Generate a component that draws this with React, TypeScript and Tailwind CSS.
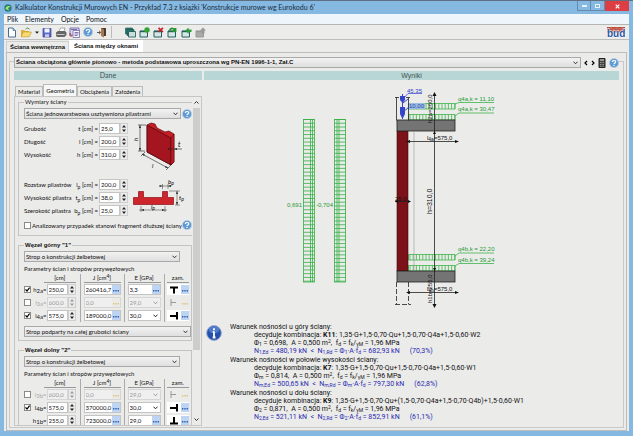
import React from 'react';

type ParamRow = {
  name: string;
  sub: string;
  size: string;
  j: string;
  e: string;
  checked?: boolean;
  noCheck?: boolean;
  eSelect?: boolean;
  joint: 'tee' | 'right' | 'left' | 'base';
};

const topRows: ParamRow[] = [
  { name: 'h', sub: '2a', size: '250,0', j: '260416,7', e: '3,3', checked: true, joint: 'tee' },
  { name: 'l', sub: '3a', size: '600,0', j: '0,0', e: '29,0', eSelect: true, joint: 'right' },
  { name: 'l', sub: '4a', size: '575,0', j: '189000,0', e: '30,0', checked: true, eSelect: true, joint: 'left' },
];

const bottomRows: ParamRow[] = [
  { name: 'l', sub: '3b', size: '600,0', j: '0,0', e: '29,0', eSelect: true, joint: 'right' },
  { name: 'l', sub: '4b', size: '575,0', j: '370000,0', e: '30,0', checked: true, eSelect: true, joint: 'left' },
  { name: 'h', sub: '1b', size: '255,0', j: '723000,0', e: '29,0', noCheck: true, joint: 'base' },
];

const HelpIcon: React.FC = () => (
  <button type="button" aria-label="Pomoc" className="shrink-0">
    <svg className="w-[10px] h-[10px] block" viewBox="0 0 10 10">
      <circle cx="5" cy="5" r="4.6" fill="#5f9ad4" stroke="#b9cfe4" strokeWidth="0.8" />
      <path d="M3.4 3.9C3.4 2 6.7 2 6.7 3.9c0 1.2-1.7 1.2-1.7 2.3M5 7v1" stroke="#fff" strokeWidth="1.2" fill="none" />
    </svg>
  </button>
);

const Select: React.FC<{ label: string; value: string; className?: string }> = ({ label, value, className = '' }) => (
  <div className={`relative ${className}`}>
    <select
      aria-label={label}
      className="block w-full h-[11px] appearance-none border border-[#a9a9a9] bg-gradient-to-b from-[#f2f2f2] to-[#dfdfdf] pl-px pr-3 text-[#111] leading-[9px]"
    >
      <option>{value}</option>
    </select>
    <svg className="absolute right-[3px] top-[4px] w-[5px] h-[4px] pointer-events-none" viewBox="0 0 5 4">
      <path d="M.5 .7 2.5 2.8 4.5 .7" stroke="#333" fill="none" />
    </svg>
  </div>
);

const Spinner: React.FC<{ disabled?: boolean }> = ({ disabled }) => (
  <button
    type="button"
    aria-label="Zmień wartość"
    disabled={disabled}
    className="w-[8px] h-[11px] shrink-0 border border-[#cfcfcf] bg-[#ececec] text-[#222] disabled:text-[#999]"
  >
    <svg className="block w-[6px] h-[9px]" viewBox="0 0 6 9" fill="currentColor">
      <path d="M3 1 5 3.4H1zM3 8 1 5.6h4z" />
    </svg>
  </button>
);

const DotsButton: React.FC<{ disabled?: boolean }> = ({ disabled }) => (
  <button
    type="button"
    aria-label="Więcej"
    disabled={disabled}
    className="w-[8px] h-[9px] shrink-0 bg-[#bdd4f2] text-[#2f62b0] disabled:bg-[#eceae4] disabled:text-[#d8c48c]"
  >
    <svg className="block w-[8px] h-[9px]" viewBox="0 0 8 9" fill="currentColor">
      <path d="M1 5h1.4v1.4H1zM3.3 5h1.4v1.4H3.3zM5.6 5H7v1.4H5.6z" />
    </svg>
  </button>
);

const Dimension: React.FC<{ id: string; label: string; name: string; sub?: string; value: string }> = ({
  id,
  label,
  name,
  sub,
  value,
}) => (
  <div className="flex items-center h-[13px]">
    <label htmlFor={id} className="flex flex-1 justify-between pr-px whitespace-nowrap">
      <span>{label}</span>
      <span>
        {name}
        {sub && <sub className="text-[5px] bottom-[-2px]">{sub}</sub>} [cm] =
      </span>
    </label>
    <input id={id} defaultValue={value} className="w-[21px] h-[11px] border border-[#c4c4c4] bg-white px-px" />
    <Spinner />
  </div>
);

const JointIcon: React.FC<{ joint: ParamRow['joint'] }> = ({ joint }) => (
  <svg className="block w-[13px] h-[11px]" viewBox="0 0 13 11" fill="none">
    {joint === 'tee' && <path d="M3 3.5h8M7 3.5V9.5" stroke="#000" strokeWidth="2" />}
    {joint === 'right' && <path d="M4 2v7M4 5.5h5" stroke="#999" />}
    {joint === 'left' && <path d="M10 2v7.5M3 6h7" stroke="#000" strokeWidth="2" />}
    {joint === 'base' && <path d="M3 8.5h8M7 2v6.5" stroke="#000" strokeWidth="2" />}
  </svg>
);

const Check: React.FC<{ id?: string; label?: string; checked?: boolean }> = ({ id, label, checked }) => (
  <span className="relative w-[7px] h-[7px] shrink-0 block">
    <input
      id={id}
      aria-label={label}
      type="checkbox"
      defaultChecked={checked}
      className="block w-[7px] h-[7px] appearance-none border border-[#8a8a8a] bg-white"
    />
    {checked && (
      <svg className="absolute inset-0 w-[7px] h-[7px] pointer-events-none" viewBox="0 0 7 7">
        <path d="M1.5 3.3 3 5 5.6 1.6" stroke="#000" strokeWidth="1.2" fill="none" />
      </svg>
    )}
  </span>
);

const ParamTable: React.FC<{ rows: ParamRow[] }> = ({ rows }) => (
  <table className="w-full table-fixed border-collapse mt-px">
    <thead>
      <tr className="h-[9px] leading-[8px]">
        <th className="w-[56px] p-0 pl-5 font-normal">
          <div className="border-b border-[#999] mr-1">[cm]</div>
        </th>
        <th className="w-[44px] p-0 font-normal border-l border-[#aaa]">
          <div className="border-b border-[#999] mx-[3px]">
            J [cm<sup className="text-[5px] top-[-2px]">4</sup>]
          </div>
        </th>
        <th className="w-[40px] p-0 font-normal border-l border-[#aaa]">
          <div className="border-b border-[#999] mx-[3px]">E [GPa]</div>
        </th>
        <th className="p-0 font-normal border-l border-[#aaa]">
          <div className="border-b border-[#999] mx-[2px]">zam.</div>
        </th>
      </tr>
    </thead>
    <tbody>
      {rows.map((row) => {
        const off = !row.checked && !row.noCheck;
        const box = off ? 'border-[#d6d6d6] bg-[#efefef] text-[#999]' : 'border-[#c4c4c4] bg-white text-[#111]';
        return (
          <tr key={row.sub} className={off ? 'h-[13px] text-[#aaa]' : 'h-[13px]'}>
            <td className="p-0">
              <div className="flex items-center">
                {row.noCheck ? <span className="w-[7px]" /> : <Check label={row.name + row.sub} checked={row.checked} />}
                <span className="flex-1 text-right whitespace-nowrap">
                  {row.name}
                  <sub className="text-[6px] bottom-[-1px]">{row.sub}</sub>=
                </span>
                <input
                  aria-label={`${row.name}${row.sub} [cm]`}
                  disabled={off}
                  defaultValue={row.size}
                  className={`w-[21px] h-[11px] border px-px ${box}`}
                />
                <Spinner disabled={off} />
                <span className="w-[4px]" />
              </div>
            </td>
            <td className="p-0 border-l border-[#aaa]">
              <div className={`flex items-center mx-[3px] h-[11px] border ${box}`}>
                <input aria-label={`J ${row.sub}`} disabled={off} defaultValue={row.j} className="w-0 flex-1 pl-px" />
                <DotsButton disabled={off} />
              </div>
            </td>
            <td className="p-0 border-l border-[#aaa]">
              {row.eSelect ? (
                <div className="relative mx-[3px]">
                  <select
                    aria-label={`E ${row.sub}`}
                    disabled={off}
                    className={`block w-full h-[11px] appearance-none border pl-px leading-[9px] opacity-100 ${box}`}
                  >
                    <option>{row.e}</option>
                  </select>
                  <svg className="absolute right-[3px] top-[4px] w-[5px] h-[4px] pointer-events-none" viewBox="0 0 5 4">
                    <path d="M.5 .7 2.5 2.8 4.5 .7" stroke={off ? '#999' : '#222'} fill="none" />
                  </svg>
                </div>
              ) : (
                <div className={`flex items-center mx-[3px] h-[11px] border ${box}`}>
                  <input aria-label={`E ${row.sub}`} defaultValue={row.e} className="w-0 flex-1 pl-px" />
                  <DotsButton />
                </div>
              )}
            </td>
            <td className="p-0 border-l border-[#aaa]">
              <div className={`flex items-center justify-between mx-[2px] h-[11px] ${off ? '' : 'bg-white'}`}>
                <JointIcon joint={row.joint} />
                <DotsButton disabled={off} />
              </div>
            </td>
          </tr>
        );
      })}
    </tbody>
  </table>
);

const ElementIcon: React.FC<{ label: string; mark: React.ReactNode; muted?: boolean }> = ({ label, mark, muted }) => (
  <button type="button" aria-label={label} className="ml-[3px]">
    <svg className="w-[11px] h-[11px]" viewBox="0 0 11 11">
      <path d="M1 4h7.5v6H1z" fill={muted ? '#aaa' : '#d6e6e8'} stroke={muted ? '#999' : '#24615c'} />
      <path d="M1 4.5h7.5" stroke={muted ? '#999' : '#24615c'} strokeWidth="1.4" />
      {mark}
    </svg>
  </button>
);

const ToolbarIcons: React.FC = () => (
  <>
    <button type="button" aria-label="Nowy" className="ml-[3px]">
      <svg className="w-[10px] h-[11px]" viewBox="0 0 10 11">
        <path d="M1.5 1h4.5l2.5 2.5V10h-7z" fill="#fff" stroke="#4c6c94" />
        <path d="M6 1v2.5h2.5" fill="#9fc5ea" stroke="#4c6c94" strokeWidth=".7" />
      </svg>
    </button>
    <button type="button" aria-label="Otwórz" className="ml-[3px] flex items-center gap-[3px]">
      <svg className="w-[12px] h-[11px]" viewBox="0 0 12 11">
        <path d="M1 9.5V3h3l1 1h4v5.5z" fill="#e0b038" />
        <path d="M1 9.8 3.3 5H11.5L9.3 9.8z" fill="#f8da70" stroke="#bb8c25" strokeWidth=".5" />
        <path d="M5.5 2.2c1.5-1.7 3-1.4 4 .2" stroke="#3d8f39" fill="none" />
      </svg>
      <svg className="w-[4px] h-[3px]" viewBox="0 0 4 3"><path d="M0 .5h4L2 2.7z" fill="#222" /></svg>
    </button>
    <button type="button" aria-label="Zapisz" className="ml-[3px]">
      <svg className="w-[10px] h-[11px]" viewBox="0 0 10 11">
        <path d="M1 1.5h8v8.5H1z" fill="#5a68c4" stroke="#353f94" strokeWidth=".7" />
        <path d="M2.5 1.5h5v4h-5z" fill="#eef1ff" />
        <path d="M3 7.2h4V10H3z" fill="#c2c8ef" />
      </svg>
    </button>
    <button type="button" aria-label="Drukuj" className="ml-[3px]">
      <svg className="w-[12px] h-[11px]" viewBox="0 0 12 11">
        <path d="M4 4.5 5.5 1h4.5L9 4.5z" fill="#fff" stroke="#777" strokeWidth=".6" />
        <path d="M1 5.5 3 4h7l1.5 1.5V8L9.5 10H2L1 8.5z" fill="#666" />
        <path d="M1.5 7.5h8" stroke="#d0d0d0" strokeWidth=".9" />
      </svg>
    </button>
    <button type="button" aria-label="Raport" className="ml-[2px]">
      <svg className="w-[11px] h-[11px]" viewBox="0 0 11 11">
        <path d="M1 1h9v7H1z" fill="#ddd8ee" stroke="#65599b" strokeWidth=".8" />
        <path d="M4 3.5h6.5v7H4z" fill="#f8f8ff" stroke="#65599b" strokeWidth=".7" />
        <path d="M2 2.5h6M5.5 5.5h4M5.5 7h4M5.5 8.5h3" stroke="#66569c" strokeWidth=".8" />
        <path d="M1 6v3h2" stroke="#aa334a" fill="none" />
      </svg>
    </button>
    <span className="ml-[3px] flex"><HelpIcon /></span>
    <button type="button" aria-label="Zamknij" className="ml-[4px]">
      <svg className="w-[10px] h-[11px]" viewBox="0 0 10 11">
        <path d="M4 1h5v8H4z" fill="#4a3a30" />
        <path d="M4 1l3 1.5V10.5L4 9z" fill="#a87850" />
        <path d="M0 5.5h3M2 3.8 3.8 5.5 2 7.2" stroke="#555" fill="none" />
      </svg>
    </button>
    <span className="ml-[4px] w-px h-[12px] bg-[#bbb]" />
    <button type="button" aria-label="Elementy" className="ml-[13px]">
      <svg className="w-[11px] h-[11px]" viewBox="0 0 11 11">
        <path d="M.5 1h7v6h-7zM2 2.5h7v6H2z" fill="#2c7770" stroke="#17554e" strokeWidth=".6" />
        <path d="M3.5 4.5h7V10h-7z" fill="#c9dddd" stroke="#17554e" strokeWidth=".8" />
      </svg>
    </button>
    <ElementIcon label="Dodaj" mark={<circle cx="8" cy="3" r="2.7" fill="#35a332" />} />
    <ElementIcon label="Usuń" mark={<path d="M5.5 .8 10 5M10 .8 5.5 5" stroke="#c71f2b" strokeWidth="1.7" />} />
    <ElementIcon
      label="Zmień"
      mark={<path d="M2.5 3.5c1-2.5 4-3 5.5 0M8.5 1v3.2H5.5" stroke="#279535" strokeWidth="1.8" fill="none" />}
    />
    <ElementIcon label="Eksportuj" mark={<path d="M4.5 3.5 7.5 .5v2H10.5v2.5H7.5v2z" fill="#2b9b35" />} />
    <ElementIcon label="Importuj" muted mark={<path d="M5 3.5 8 .5l3 3H9.5v3h-3v-3z" fill="#999" />} />
  </>
);

const WallPicture: React.FC = () => (
  <svg className="w-[54px] h-[50px]" viewBox="0 0 54 50">
    <path d="M14 3 18 1l4 1 2 4 8 4 4-1 5 3v28l-3 3-24-13z" fill="#c81e26" stroke="#5b0a10" strokeWidth=".7" />
    <path d="M14 3 38 16v27L14 30z" fill="#a51520" stroke="#4b080c" strokeWidth=".7" />
    <path d="M38 16 41 12v28l-3 3z" fill="#c21822" stroke="#4b080c" strokeWidth=".5" />
    <path d="M7 3v26M5 3h8M5 29h7M9 32 35 46M8 34l4-4M33 48l5-5M36 27h13" stroke="#222" strokeWidth=".6" fill="none" />
    <path d="M7 3 6 6h2zM7 29 6 26h2zM9 32l3 .6-1 1.5zM35 46l-3-.6 1-1.5zM41 27l3-1v2zM37 27l-2-1v2z" fill="#222" />
    <text x="5" y="19" fontSize="6" fontStyle="italic" transform="rotate(-90 5 19)">h</text>
    <text x="19" y="46" fontSize="6" fontStyle="italic">l</text>
    <text x="45" y="25" fontSize="7" fontStyle="italic">t</text>
  </svg>
);

const PilasterPicture: React.FC = () => (
  <svg className="w-[54px] h-[38px]" viewBox="0 0 54 38">
    <path d="M.5 19.500h5v-6h5v6h19v-6h5v6h6v7H.5z" fill="#ce242b" stroke="#8a1016" strokeWidth=".7" />
    <path d="M27 8h11M29.500 6v5M35 6v5M8 28v6M32 28v6M6 32h28M44 13v14M36 13h11M42 27h5" stroke="#333" strokeWidth=".5" fill="none" />
    <path d="M29.500 8l-3-1v2zM35 8l3-1v2zM8 32l3-1v2zM32 32l-3-1v2zM44 13l-1 3h2zM44 27l-1-3h2z" fill="#222" />
    <text x="35" y="6" fontSize="6" fontStyle="italic">b<tspan fontSize="5" dy="1">p</tspan></text>
    <text x="18" y="31" fontSize="6" fontStyle="italic">l<tspan fontSize="5" dy="1">p</tspan></text>
    <text x="46" y="22" fontSize="6" fontStyle="italic">t<tspan fontSize="5" dy="1">p</tspan></text>
  </svg>
);

const rungs = Array.from({ length: 44 }, (_, i) => 119.5 + i * 3.76);
const hatch = Array.from({ length: 15 }, (_, i) => 410 + i * 3.2);

const WallDiagram: React.FC = () => (
  <svg className="block shrink-0 w-[416px] h-[238px]" viewBox="204 80 416 238" fontSize="6">
    <g stroke="#35b045" fill="none" strokeWidth=".8">
      <rect x="303.5" y="119.5" width="11" height="162.5" />
      <rect x="334.5" y="119.5" width="11" height="162.5" />
      <path d="M310.5 119.5v162.5M312.5 119.5v162.5M337 119.5v162.5M339 119.5v162.5" />
      {rungs.map((y) => (
        <path key={y} d={`M303.5 ${y}h11M334.5 ${y}h11`} />
      ))}
    </g>
    <g fill="#249a35">
      <text x="287" y="207">0,691</text>
      <text x="316" y="207">-0,704</text>
    </g>

    <g fill="none" stroke="#3db54a" strokeWidth=".8">
      {[103.5, 114.5, 254.5, 265.5].map((y) => (
        <g key={y}>
          <path d={`M408.5 ${y}h46.5v5.5h-46.5z`} />
          {hatch.map((x) => (
            <path key={x} d={`M${x} ${y}v5.5`} />
          ))}
        </g>
      ))}
      <path d="M455 104l4-1.5h35M455 116l4-3h35M455 256l4-3h35M455 266l4-2.5h35" />
    </g>
    <g fill="#249a35">
      <text x="458" y="101">q4a,k = 11,10</text>
      <text x="458" y="111">q4a,k = 30,47</text>
      <text x="458" y="251">q4b,k = 22,20</text>
      <text x="458" y="262">q4b,k = 39,24</text>
    </g>

    <rect x="397" y="131" width="11" height="140" fill="#7c1219" stroke="#3e080c" strokeWidth=".6" />
    <rect x="397" y="120" width="58" height="11" fill="#747474" stroke="#222" strokeWidth=".8" />
    <rect x="397" y="271" width="58" height="11" fill="#747474" stroke="#222" strokeWidth=".8" />
    <path d="M414 131v140" stroke="#999" strokeWidth=".6" />

    <g stroke="#222" strokeWidth=".8" fill="none">
      <path d="M396.5 97.5v23M395 97.5h4M408.5 97.5v23M406 97.5h4" />
      <path d="M396.5 282v22.5M408.5 282v22.5M395 304.5h16" strokeDasharray="5 2" />
      <path d="M434.5 93v214M407 141.5h51M407 292.5h51M395 201.5h15" />
    </g>
    <path
      d="M434.5 92l-2 4h4zM434.5 308l-2-4h4zM459 141.5l-4-1.5v3zM459 292.5l-4-1.5v3zM406 141.5l4-1.5v3zM406 292.5l4-1.5v3zM395 201.5l3-1.5v3zM411 201.5l-3-1.5v3zM434.5 131l-1.5 3h3zM434.5 271l-1.5-3h3z"
      fill="#111"
    />
    <g fill="#111">
      <text x="427" y="140">l<tspan fontSize="5" dy="1">4a</tspan><tspan dy="-1">=575,0</tspan></text>
      <text x="427" y="291">l<tspan fontSize="5" dy="1">4b</tspan><tspan dy="-1">=575,0</tspan></text>
      <text x="395" y="201">25,0</text>
      <text fontSize="7" transform="translate(432 214) rotate(-90)">h=310,0</text>
      <text transform="translate(432 123) rotate(-90)">h2a=260,0</text>
      <text transform="translate(432 303) rotate(-90)">h1b=255,0</text>
    </g>

    <g fill="#3545c8">
      <path d="M402.500 94v25M403 103l5-4M403 112l6-5" stroke="#3545c8" />
      <path d="M400 96h5v4l-2.5 3-2.5-3zM400 107h5v7l-2.5 5-2.5-5z" />
      <text x="407" y="92.500">45,35</text>
      <path d="M404 98l4-4.500h14" stroke="#3545c8" strokeWidth=".7" fill="none" />
      <rect x="409" y="103" width="16" height="6" fill="#9cbce0" />
      <text x="409" y="108" fill="#2448b4">10,00</text>
    </g>
  </svg>
);

type Condition = {
  place: string;
  combo: string;
  formula: string;
  phi: string;
  phiValue: string;
  ed: string;
  rd: string;
  use: string;
};

const conditions: Condition[] = [
  { place: 'u góry ściany:', combo: 'K11', formula: '1,35·G+1,5·0,70·Qu+1,5·0,70·Q4a+1,5·0,60·W2', phi: '1', phiValue: '0,698', ed: '480,19', rd: '682,93', use: '70,3%' },
  { place: 'w połowie wysokości ściany:', combo: 'K7', formula: '1,35·G+1,5·0,70·Qu+1,5·0,70·Q4a+1,5·0,60·W1', phi: 'm', phiValue: '0,814', ed: '500,65', rd: '797,30', use: '62,8%' },
  { place: 'u dołu ściany:', combo: 'K9', formula: '1,35·G+1,5·0,70·Qu+(1,5·0,70·Q4a+1,5·0,70·Q4b)+1,5·0,60·W1', phi: '2', phiValue: '0,871', ed: '521,11', rd: '852,91', use: '61,1%' },
];

const Sub: React.FC<{ children: React.ReactNode }> = ({ children }) => (
  <sub className="text-[5px] bottom-[-1px]">{children}</sub>
);

const Results: React.FC = () => (
  <div className="flex gap-2 pl-[2px] pt-[5px] text-[7px] leading-[8px] text-[#111] font-['Roboto',sans-serif]">
    <svg className="w-[16px] h-[16px] mt-[2px] shrink-0" viewBox="0 0 16 16">
      <circle cx="8" cy="8" r="7.4" fill="#2450ae" stroke="#9fb0ce" />
      <ellipse cx="8" cy="4.8" rx="5.5" ry="3.5" fill="#6d94da" opacity=".6" />
      <path d="M8 3.2v2M8 6.5v6M6.7 12.5h2.8M6.7 6.8H8" stroke="#fff" strokeWidth="1.8" />
    </svg>
    <div className="flex flex-col gap-px whitespace-nowrap">
      {conditions.map((c) => (
        <div key={c.combo}>
          <p>Warunek nośności {c.place}</p>
          <div className="pl-6">
            <p>decyduje kombinacja: <b>{c.combo}</b>: {c.formula}</p>
            <p>
              Φ<Sub>{c.phi}</Sub> = {c.phiValue},&nbsp; A = 0,500 m<sup className="text-[5px] top-[-2px]">2</sup>,&nbsp; f<Sub>d</Sub> = f
              <Sub>k</Sub>/<Sub>γM</Sub> = 1,96 MPa
            </p>
            <p className="text-[#2a2ab0]">
              N<Sub>{c.phi},Ed</Sub> = {c.ed} kN&nbsp; &lt;&nbsp; N<Sub>{c.phi},Rd</Sub> = Φ<Sub>{c.phi}</Sub>·A·f<Sub>d</Sub> = {c.rd} kN
              <span className="ml-[10px]">({c.use})</span>
            </p>
          </div>
        </div>
      ))}
    </div>
  </div>
);

const GeometryForm: React.FC = () => (
  <div className="flex-1 min-h-0 flex border border-[#c6c6c6] overflow-hidden pl-[3px]">
    <div className="flex-1 min-w-0 overflow-hidden pt-px flex flex-col gap-[5px]">
      <fieldset className="shrink-0 border border-[#c4c4c4] pl-[5px] pb-[5px]">
        <legend className="px-px leading-[8px]">Wymiary ściany</legend>
        <div className="flex items-center gap-px mt-[2px]">
          <Select label="Rodzaj ściany" value="Ściana jednowarstwowa usztywniona pilastrami" className="flex-1" />
          <HelpIcon />
        </div>
        <div className="flex gap-[5px] h-[56px] mt-[3px]">
          <div className="w-[104px]">
            <Dimension id="grubosc" label="Grubość" name="t" value="25,0" />
            <Dimension id="dlugosc" label="Długość" name="l" value="200,0" />
            <Dimension id="wysokosc" label="Wysokość" name="h" value="310,0" />
          </div>
          <WallPicture />
        </div>
        <div className="flex gap-[5px]">
          <div className="w-[104px]">
            <Dimension id="rozstaw" label="Rozstaw pilastrów" name="l" sub="p" value="200,0" />
            <Dimension id="wysPilastra" label="Wysokość pilastra" name="t" sub="p" value="38,0" />
            <Dimension id="szerPilastra" label="Szerokość pilastra" name="b" sub="p" value="25,0" />
          </div>
          <PilasterPicture />
        </div>
        <div className="flex items-center justify-between mt-[3px]">
          <label htmlFor="fragment" className="flex items-center gap-px whitespace-nowrap">
            <Check id="fragment" />
            Analizowany przypadek stanowi fragment dłuższej ściany
          </label>
          <HelpIcon />
        </div>
      </fieldset>
      <fieldset className="shrink-0 border border-[#c4c4c4] pl-[5px] pb-[3px]">
        <legend className="px-px font-['Liberation_Sans',sans-serif] font-bold leading-[8px]">Węzeł górny "1"</legend>
        <Select label="Typ węzła górnego" value="Strop o konstrukcji żelbetowej" className="mt-[2px] mr-[11px]" />
        <p className="mt-[3px] leading-[8px]">Parametry ścian i stropów przywęzłowych</p>
        <ParamTable rows={topRows} />
        <Select label="Podparcie stropu" value="Strop podparty na całej grubości ściany" className="mt-[4px]" />
      </fieldset>
      <fieldset className="shrink-0 border border-[#c4c4c4] pl-[5px] pb-[3px]">
        <legend className="px-px font-['Liberation_Sans',sans-serif] font-bold leading-[8px]">Węzeł dolny "2"</legend>
        <Select label="Typ węzła dolnego" value="Strop o konstrukcji żelbetowej" className="mt-[2px] mr-[11px]" />
        <p className="mt-[3px] leading-[8px]">Parametry ścian i stropów przywęzłowych</p>
        <ParamTable rows={bottomRows} />
      </fieldset>
    </div>
    <div className="w-[9px] flex flex-col items-center py-[3px]">
      <svg className="w-[5px] h-[5px]" viewBox="0 0 5 5"><path d="M.5 3.5 2.5 1.5 4.5 3.5" stroke="#333" fill="none" /></svg>
      <div className="mt-[3px] w-[7px] h-3/4 bg-[#cdcdcd]" />
      <svg className="mt-auto w-[5px] h-[5px]" viewBox="0 0 5 5"><path d="M.5 1.5 2.5 3.5 4.5 1.5" stroke="#333" fill="none" /></svg>
    </div>
  </div>
);

const App: React.FC = () => (
  <div className="h-screen flex flex-col overflow-hidden bg-[#86b9e2] border-t border-[#5d6f80] pl-[4px] pr-[4px] pb-[5px] text-[6px] leading-[9px] text-[#111] font-['Liberation_Sans',sans-serif]">
    <header className="flex h-[13px] shrink-0 items-center gap-[3px] text-[#172b3d]">
      <svg className="w-[8px] h-[8px]" viewBox="0 0 8 8">
        <circle cx="4" cy="4" r="3.7" fill="#247e82" />
        <path d="M1.5 5C2 2 4 1.5 6.5 2.5L4 4l1 2.5z" fill="#b7df65" />
      </svg>
      <h1 className="flex-1 text-[7px] font-['Lato',sans-serif] whitespace-nowrap">
        Kalkulator Konstrukcji Murowych EN - Przykład 7.3 z książki 'Konstrukcje murowe wg Eurokodu 6'
      </h1>
      <div className="flex self-start h-[10px]">
        <button type="button" aria-label="Minimalizuj" className="w-[14px] border border-t-0 border-[#638bad] flex items-center justify-center">
          <span className="w-[5px] h-[2px] bg-[#e8f1f8]" />
        </button>
        <button type="button" aria-label="Maksymalizuj" className="w-[14px] border border-t-0 border-l-0 border-[#638bad] flex items-center justify-center">
          <span className="w-[5px] h-[4px] border border-[#e8f1f8]" />
        </button>
        <button type="button" aria-label="Zamknij okno" className="w-[24px] bg-[#dd3e43] flex items-center justify-center">
          <svg className="w-[5px] h-[5px]" viewBox="0 0 5 5"><path d="M.7 .7 4.3 4.3M4.3 .7 .7 4.3" stroke="#fff" strokeWidth="1.2" /></svg>
        </button>
      </div>
    </header>

    <nav className="flex h-[11px] shrink-0 items-center gap-[7px] bg-[#eef5fb] border-b border-[#b5b5b5] px-[3px] text-[7px] font-['Lato',sans-serif]">
      <button type="button">Plik</button>
      <button type="button">Elementy</button>
      <button type="button">Opcje</button>
      <button type="button">Pomoc</button>
    </nav>

    <div className="flex h-[15px] shrink-0 items-center bg-[#ececeb] border-b border-[#bdbdbd]">
      <ToolbarIcons />
      <svg className="ml-auto mr-[4px] w-[18px] h-[11px]" viewBox="0 0 18 11">
        <path d="M0 0h18v5.500H0z" fill="#b94c3e" />
        <path d="M0 1.8h18M0 3.6h18M4 0v1.8M10 0v1.8M15 0v1.8M7 1.8v1.8M13 1.8v1.8" stroke="#e3a08f" strokeWidth=".4" />
        <text x="0" y="10.3" fontSize="10" fontWeight="bold" fill="#2c5aa4" stroke="#fff" strokeWidth=".8" paintOrder="stroke">bud</text>
      </svg>
    </div>

    <main className="flex-1 min-h-0 flex flex-col bg-[#ebebea]">
      <div role="tablist" className="flex h-[12px] shrink-0 items-end px-[2px] font-bold whitespace-nowrap">
        <button type="button" role="tab" className="h-[11px] px-[3px] border border-b-0 border-[#cfcfcf]">Ściana wewnętrzna</button>
        <button type="button" role="tab" aria-selected="true" className="h-[12px] px-[5px] bg-white">Ściana między oknami</button>
      </div>

      <div className="flex-1 min-h-0 flex flex-col border border-[#bcbcbc] mx-[2px] pt-[8px] px-[2px] pb-[2px]">
        <div className="flex-1 min-h-0 flex flex-col border border-[#c8c8c8] px-[4px] pb-px">
          <div className="flex items-center gap-[3px] -mt-[5px] mb-[3px] bg-[#ebebea]">
            <Select
              label="Metoda obliczeń"
              value="Ściana obciążona głównie pionowo - metoda podstawowa uproszczona wg PN-EN 1996-1-1, Zał.C"
              className="flex-1 font-bold"
            />
            <button type="button" aria-label="Poprzedni"><svg className="w-[4px] h-[6px]" viewBox="0 0 4 6"><path d="M3 1 1 3l2 2" stroke="#000" strokeWidth="1.2" fill="none" /></svg></button>
            <button type="button" aria-label="Następny"><svg className="w-[4px] h-[6px]" viewBox="0 0 4 6"><path d="M1 1l2 2-2 2" stroke="#000" strokeWidth="1.2" fill="none" /></svg></button>
            <button type="button" aria-label="Kalkulator">
              <svg className="w-[8px] h-[10px]" viewBox="0 0 8 10">
                <path d="M1 .5h6v9H1z" fill="#444" stroke="#222" />
                <path d="M2 2h4" stroke="#b8c8b8" strokeWidth="1.3" />
                <path d="M2 4.5h4M2 6.5h4M2 8.3h4" stroke="#aaa" strokeWidth=".8" strokeDasharray="1 .5" />
              </svg>
            </button>
            <HelpIcon />
          </div>

          <div className="flex-1 min-h-0 flex gap-[2px]">
            <section className="w-[188px] shrink-0 flex flex-col font-['Lato',sans-serif]">
              <h2 className="h-[9px] bg-[#b9d6d6] text-center text-[7px] text-[#3c5555]">Dane</h2>
              <div role="tablist" className="flex items-end h-[15px] shrink-0 px-px mt-px whitespace-nowrap">
                <button type="button" role="tab" className="h-[10px] px-[2px] border border-b-0 border-[#bbb]">Materiał</button>
                <button type="button" role="tab" aria-selected="true" className="h-[12px] px-[2px] bg-[#f7f7f7] border border-b-0 border-[#bbb]">Geometria</button>
                <button type="button" role="tab" className="h-[10px] px-[2px] border border-b-0 border-[#bbb]">Obciążenia</button>
                <button type="button" role="tab" className="h-[10px] px-[2px] border border-b-0 border-[#bbb]">Założenia</button>
              </div>
              <GeometryForm />
            </section>
            <section className="flex-1 min-w-0 flex flex-col">
              <h2 className="h-[9px] bg-[#b9d6d6] text-center text-[7px] text-[#3c5555]">Wyniki</h2>
              <WallDiagram />
              <Results />
            </section>
          </div>
        </div>
      </div>
    </main>
  </div>
);

export default App;
